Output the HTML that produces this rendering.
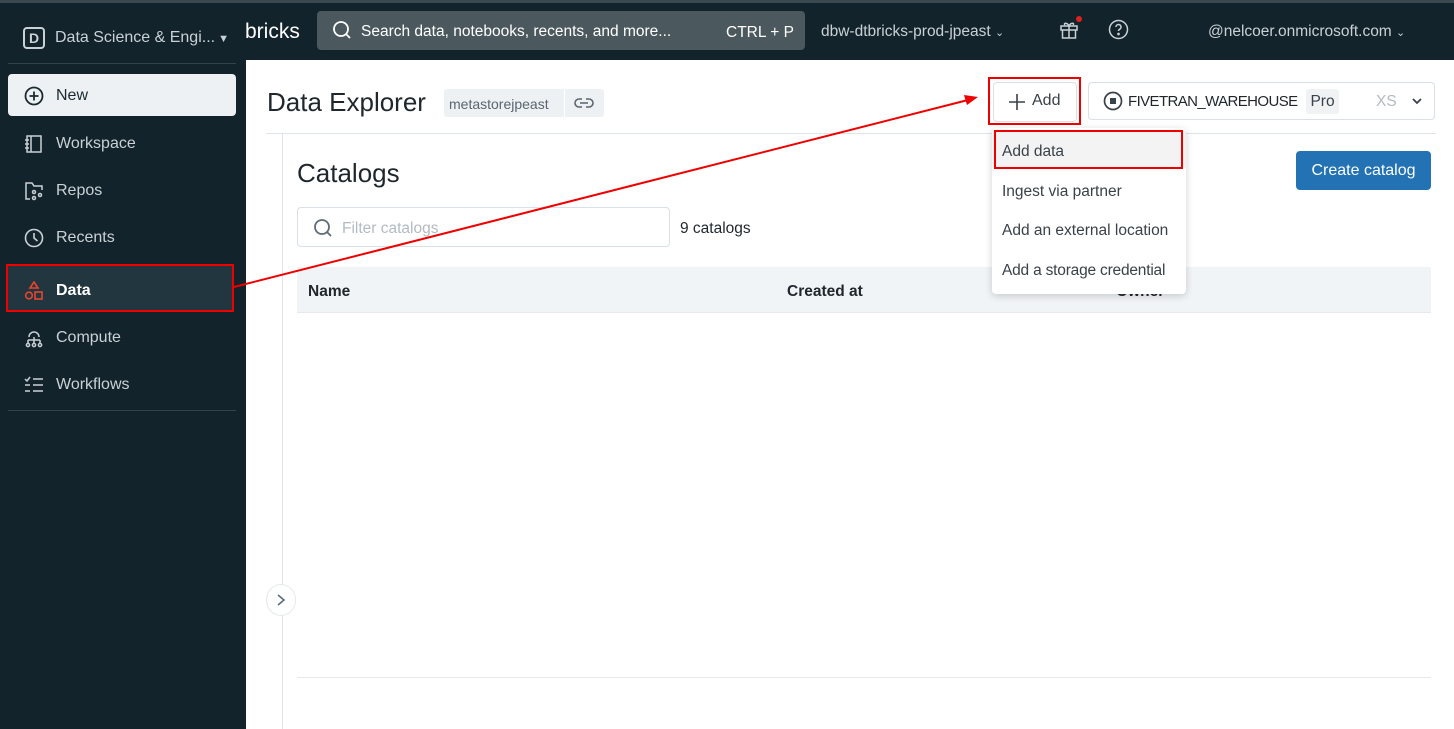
<!DOCTYPE html>
<html><head><meta charset="utf-8"><style>
*{box-sizing:border-box;margin:0;padding:0}
body{width:1454px;height:729px;overflow:hidden;background:#fff;font-family:"Liberation Sans",sans-serif;position:relative}
.abs{position:absolute;white-space:nowrap}
.side{left:0;top:0;width:246px;height:729px;background:#13232b}
.top{left:0;top:0;width:1454px;height:60px;background:#13232b;border-top:3px solid #3a4850}
.nav{position:absolute;left:24px;font-size:16px;color:#c9d1d6;display:flex;align-items:center;gap:12px;white-space:nowrap}
.nav svg{width:20px;height:20px}
.menu div{position:absolute;left:10px;font-size:15.5px;color:#3a4148;white-space:nowrap}
</style></head><body>
<div class="abs side"></div>
<div class="abs top"></div>
<!-- sidebar header -->
<div class="abs" style="left:23px;top:27px;width:22px;height:22px;border:2px solid #c9d1d6;border-radius:4px;color:#c9d1d6;font-size:14px;font-weight:bold;text-align:center;line-height:18px">D</div>
<div class="abs" style="left:55px;top:29px;font-size:16px;color:#c9d1d6">Data Science &amp; Engi...<span style="font-size:11px"> ▼</span></div>
<div class="abs" style="left:8px;top:63px;width:228px;height:1px;background:#34434b"></div>
<div class="abs" style="left:8px;top:74px;width:228px;height:42px;background:#eef1f3;border-radius:4px"></div>
<div class="nav" style="top:86px;color:#1b2a31"><svg viewBox="0 0 20 20" fill="none" stroke="#1b2a31" stroke-width="1.8"><circle cx="10" cy="10" r="8.5"/><path d="M10 5.5v9M5.5 10h9"/></svg>New</div>
<div class="nav" style="top:134px"><svg viewBox="0 0 20 20" fill="none" stroke="#c9d1d6" stroke-width="1.5"><rect x="3" y="2" width="14" height="16"/><path d="M7 2v16M1 6h4M1 10h4M1 14h4"/></svg>Workspace</div>
<div class="nav" style="top:181px"><svg viewBox="0 0 20 20" fill="none" stroke="#c9d1d6" stroke-width="1.5"><path d="M6 18H2V2h6l2 3h8v4"/><circle cx="10" cy="11" r="1.5"/><circle cx="10" cy="17" r="1.5"/><circle cx="16" cy="14" r="1.5"/></svg>Repos</div>
<div class="nav" style="top:228px"><svg viewBox="0 0 20 20" fill="none" stroke="#c9d1d6" stroke-width="1.6"><circle cx="10" cy="10" r="8.5"/><path d="M10 5v5l3.5 3"/></svg>Recents</div>
<div class="abs" style="left:8px;top:266px;width:226px;height:46px;background:#22363f"></div>
<div class="abs" style="left:6px;top:264px;width:228px;height:48px;border:2px solid #e00"></div>
<div class="nav" style="top:281px;color:#fff;font-weight:bold"><svg viewBox="0 0 20 20" fill="none" stroke="#e8452c" stroke-width="1.6"><path d="M10 1l4 6H6z"/><circle cx="5" cy="14.5" r="3.3"/><rect x="11" y="11" width="7" height="7"/></svg>Data</div>
<div class="nav" style="top:328px"><svg viewBox="0 0 20 20" fill="none" stroke="#c9d1d6" stroke-width="1.5"><path d="M5 9a5 5 0 0 1 10 0M10 9v6M4 12h12M4 12v3M16 12v3"/><circle cx="4" cy="17" r="1.6"/><circle cx="10" cy="17" r="1.6"/><circle cx="16" cy="17" r="1.6"/></svg>Compute</div>
<div class="nav" style="top:375px"><svg viewBox="0 0 20 20" fill="none" stroke="#c9d1d6" stroke-width="1.5"><path d="M1 4l2 2 3-4M9 4h10M1 10h5M9 10h10M1 16h5M9 16h10"/></svg>Workflows</div>
<div class="abs" style="left:8px;top:410px;width:228px;height:1px;background:#34434b"></div>
<!-- top bar -->
<div class="abs" style="left:245px;top:20px;font-size:21px;color:#fff">bricks</div>
<div class="abs" style="left:317px;top:11px;width:488px;height:39px;background:#4b585e;border-radius:4px"></div>
<svg class="abs" style="left:332px;top:20px" width="20" height="20" viewBox="0 0 20 20" fill="none" stroke="#fff" stroke-width="1.8"><circle cx="9" cy="9" r="7"/><path d="M14 14l4 4"/></svg>
<div class="abs" style="left:361px;top:23px;font-size:15.5px;color:#fff">Search data, notebooks, recents, and more...</div>
<div class="abs" style="left:726px;top:24px;font-size:15.5px;color:#fff">CTRL + P</div>
<div class="abs" style="left:821px;top:23px;font-size:15.5px;color:#c9d1d6">dbw-dtbricks-prod-jpeast <span style="font-size:11px">⌄</span></div>
<svg class="abs" style="left:1058px;top:19px" width="22" height="22" viewBox="0 0 22 22" fill="none" stroke="#c9d1d6" stroke-width="1.5"><rect x="3" y="7" width="16" height="4"/><path d="M4.5 11v8h13v-8M11 7v12M11 7c-2-4-6-3-4-1M11 7c2-4 6-3 4-1"/></svg>
<div class="abs" style="left:1076px;top:16px;width:6px;height:6px;border-radius:50%;background:#e02020"></div>
<svg class="abs" style="left:1108px;top:19px" width="21" height="21" viewBox="0 0 21 21" fill="none" stroke="#c9d1d6" stroke-width="1.5"><circle cx="10.5" cy="10.5" r="9"/><path d="M8 8a2.5 2.5 0 1 1 3.5 2.3c-.7.4-1 .9-1 1.7"/><circle cx="10.5" cy="15" r=".6" fill="#c9d1d6"/></svg>
<div class="abs" style="left:1208px;top:23px;font-size:15.5px;color:#c9d1d6">@nelcoer.onmicrosoft.com <span style="font-size:11px">⌄</span></div>
<!-- main -->
<div class="abs" style="left:267px;top:87px;font-size:26px;color:#1f272d">Data Explorer</div>
<div class="abs" style="left:444px;top:89px;width:160px;height:28px;background:#eef1f4;border-radius:3px"></div>
<div class="abs" style="left:564px;top:89px;width:1px;height:28px;background:#fff"></div>
<div class="abs" style="left:449px;top:96px;font-size:14px;color:#5a6670">metastorejpeast</div>
<svg class="abs" style="left:574px;top:95px" width="20" height="16" viewBox="0 0 20 16" fill="none" stroke="#5a6670" stroke-width="1.6"><path d="M8 4H5a4 4 0 0 0 0 8h3M12 4h3a4 4 0 0 1 0 8h-3M6 8h8"/></svg>
<div class="abs" style="left:266px;top:133px;width:1170px;height:1px;background:#dfe4e8"></div>
<div class="abs" style="left:282px;top:134px;width:1px;height:595px;background:#e0e5ea"></div>
<div class="abs" style="left:266px;top:584px;width:30px;height:32px;border-radius:50%;background:#fff;border:1px solid #e5e9ec"></div>
<svg class="abs" style="left:274px;top:592px" width="14" height="16" viewBox="0 0 14 16" fill="none" stroke="#5a6c80" stroke-width="1.6"><path d="M4 3l6 5-6 5"/></svg>
<div class="abs" style="left:297px;top:158px;font-size:26px;color:#1f272d">Catalogs</div>
<div class="abs" style="left:297px;top:207px;width:373px;height:40px;border:1px solid #d9e0e6;border-radius:4px"></div>
<svg class="abs" style="left:313px;top:218px" width="20" height="20" viewBox="0 0 20 20" fill="none" stroke="#5f6b74" stroke-width="1.8"><circle cx="9" cy="9" r="7"/><path d="M14 14l4 4"/></svg>
<div class="abs" style="left:342px;top:220px;font-size:15.5px;color:#b3bbc1">Filter catalogs</div>
<div class="abs" style="left:680px;top:220px;font-size:15.5px;color:#1f272d">9 catalogs</div>
<div class="abs" style="left:297px;top:267px;width:1134px;height:46px;background:#f1f4f7;border-bottom:1px solid #e6eaee"></div>
<div class="abs" style="left:308px;top:283px;font-size:15.5px;font-weight:bold;color:#1f272d">Name</div>
<div class="abs" style="left:787px;top:283px;font-size:15.5px;font-weight:bold;color:#1f272d">Created at</div>
<div class="abs" style="left:1116px;top:283px;font-size:15.5px;font-weight:bold;color:#1f272d">Owner</div>
<div class="abs" style="left:297px;top:677px;width:1134px;height:1px;background:#e6eaee"></div>
<div class="abs" style="left:1296px;top:151px;width:135px;height:39px;background:#2272b4;border-radius:4px;color:#fff;font-size:16px;text-align:center;line-height:40px">Create catalog</div>
<!-- add button -->
<div class="abs" style="left:993px;top:82px;width:84px;height:40px;border:1px solid #d9e0e6;border-radius:4px;background:#fff"></div>
<svg class="abs" style="left:1007px;top:92px" width="20" height="20" viewBox="0 0 20 20" stroke="#3a4148" stroke-width="1.6"><path d="M10 2v16M2 10h16"/></svg>
<div class="abs" style="left:1032px;top:92px;font-size:16px;color:#3a4148">Add</div>
<div class="abs" style="left:988px;top:77px;width:93px;height:48px;border:2px solid #e00"></div>
<div class="abs" style="left:1088px;top:82px;width:347px;height:38px;border:1px solid #d9e0e6;border-radius:4px"></div>
<svg class="abs" style="left:1103px;top:91px" width="20" height="20" viewBox="0 0 20 20"><circle cx="10" cy="10" r="8.5" fill="none" stroke="#3a4148" stroke-width="1.7"/><rect x="7" y="7" width="6" height="6" fill="#3a4148"/></svg>
<div class="abs" style="left:1128px;top:93px;font-size:15px;letter-spacing:-0.6px;color:#1f272d">FIVETRAN_WAREHOUSE</div>
<div class="abs" style="left:1306px;top:89px;width:33px;height:25px;background:#f0f2f4;border-radius:3px;font-size:15.5px;color:#3a4148;text-align:center;line-height:26px">Pro</div>
<div class="abs" style="left:1376px;top:93px;font-size:15.5px;color:#b3bbc1">XS</div>
<svg class="abs" style="left:1411px;top:96px" width="12" height="10" viewBox="0 0 12 10" fill="none" stroke="#3a4148" stroke-width="1.8"><path d="M2 3l4 4 4-4"/></svg>
<!-- dropdown -->
<div class="abs" style="left:992px;top:128px;width:194px;height:166px;background:#fff;border-radius:4px;box-shadow:0 2px 8px rgba(0,0,0,.18)"></div>
<div class="abs" style="left:992px;top:131px;width:194px;height:37px;background:#f3f3f3"></div>
<div class="abs" style="left:994px;top:130px;width:189px;height:39px;border:2px solid #e00"></div>
<div class="abs menu" style="left:992px;top:0;width:194px">
<div style="top:143px">Add data</div>
<div style="top:183px">Ingest via partner</div>
<div style="top:222px">Add an external location</div>
<div style="top:262px;letter-spacing:-0.2px">Add a storage credential</div>
</div>
<!-- arrow -->
<svg class="abs" style="left:0;top:0" width="1454" height="729"><line x1="234" y1="287" x2="968" y2="100" stroke="#e00" stroke-width="2"/><polygon points="978,97 964,95 967,105" fill="#e00"/></svg>
</body></html>
